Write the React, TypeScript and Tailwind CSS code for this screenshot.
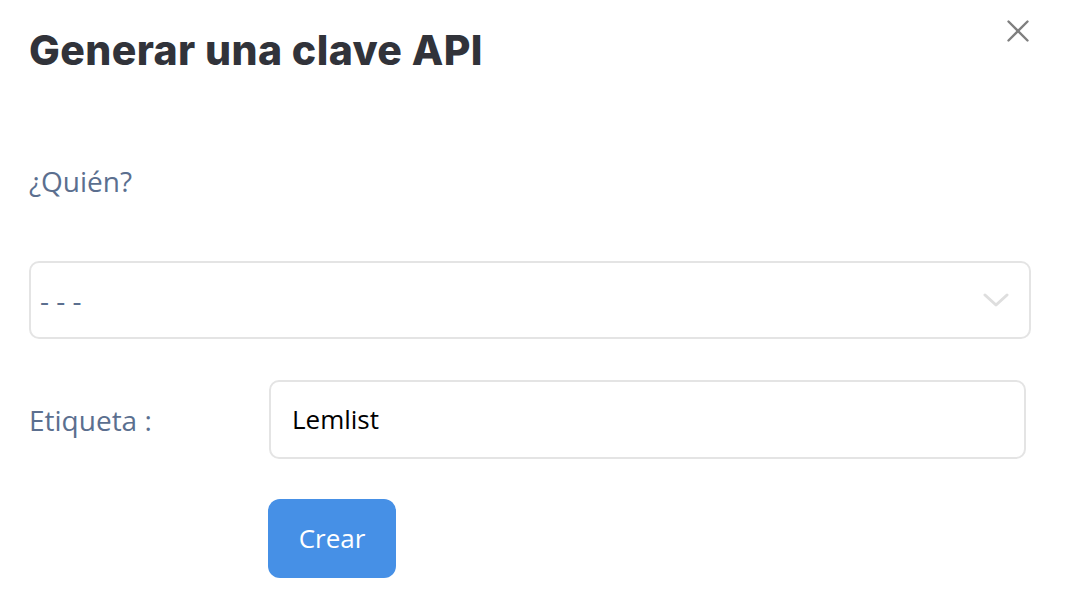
import { X } from 'lucide-react';

export default function App() {
  return (
    <div className="w-[1068px] h-[612px] bg-white relative" style={{ fontFamily: '"Open Sans", sans-serif' }}>
      <button className="absolute left-[999px] top-[12px] text-[#7f7f7f]" aria-label="Cerrar">
        <X size={38} strokeWidth={1.5} />
      </button>
      <div className="flex flex-col px-[29px] pt-[24px]">
        <h1
          className="text-[41px] leading-[52px] font-extrabold text-[#31333a] tracking-[0.4px]"
          style={{ fontFamily: 'Inter, sans-serif' }}
        >
          Generar una clave API
        </h1>
        <p className="mt-[86px] text-[28px] leading-[38px] text-[#5b6f8f]">¿Quién?</p>
        <div className="mt-[61px] w-[1002px] h-[78px] border-2 border-[#e4e4e4] rounded-[10px] flex items-center justify-between pl-[9px] pr-[20px]">
          <span className="text-[28px] text-[#5b6f8f]">- - -</span>
          <svg width="26" height="16" viewBox="0 0 26 16" fill="none" className="text-[#dedede]">
            <polyline points="2,3 13,13 24,3" stroke="currentColor" strokeWidth="3" strokeLinecap="round" strokeLinejoin="round" />
          </svg>
        </div>
        <div className="mt-[41px] flex items-center">
          <span className="w-[240px] text-[28px] text-[#5b6f8f]">Etiqueta :</span>
          <div className="w-[757px] h-[79px] border-2 border-[#e4e4e4] rounded-[10px] flex items-center px-[21px]">
            <span className="text-[26px] text-black">Lemlist</span>
          </div>
        </div>
        <div className="mt-[40px] pl-[239px]">
          <button className="w-[128px] h-[79px] rounded-[12px] bg-[#4690e6] text-white text-[26px]">Crear</button>
        </div>
      </div>
    </div>
  );
}
